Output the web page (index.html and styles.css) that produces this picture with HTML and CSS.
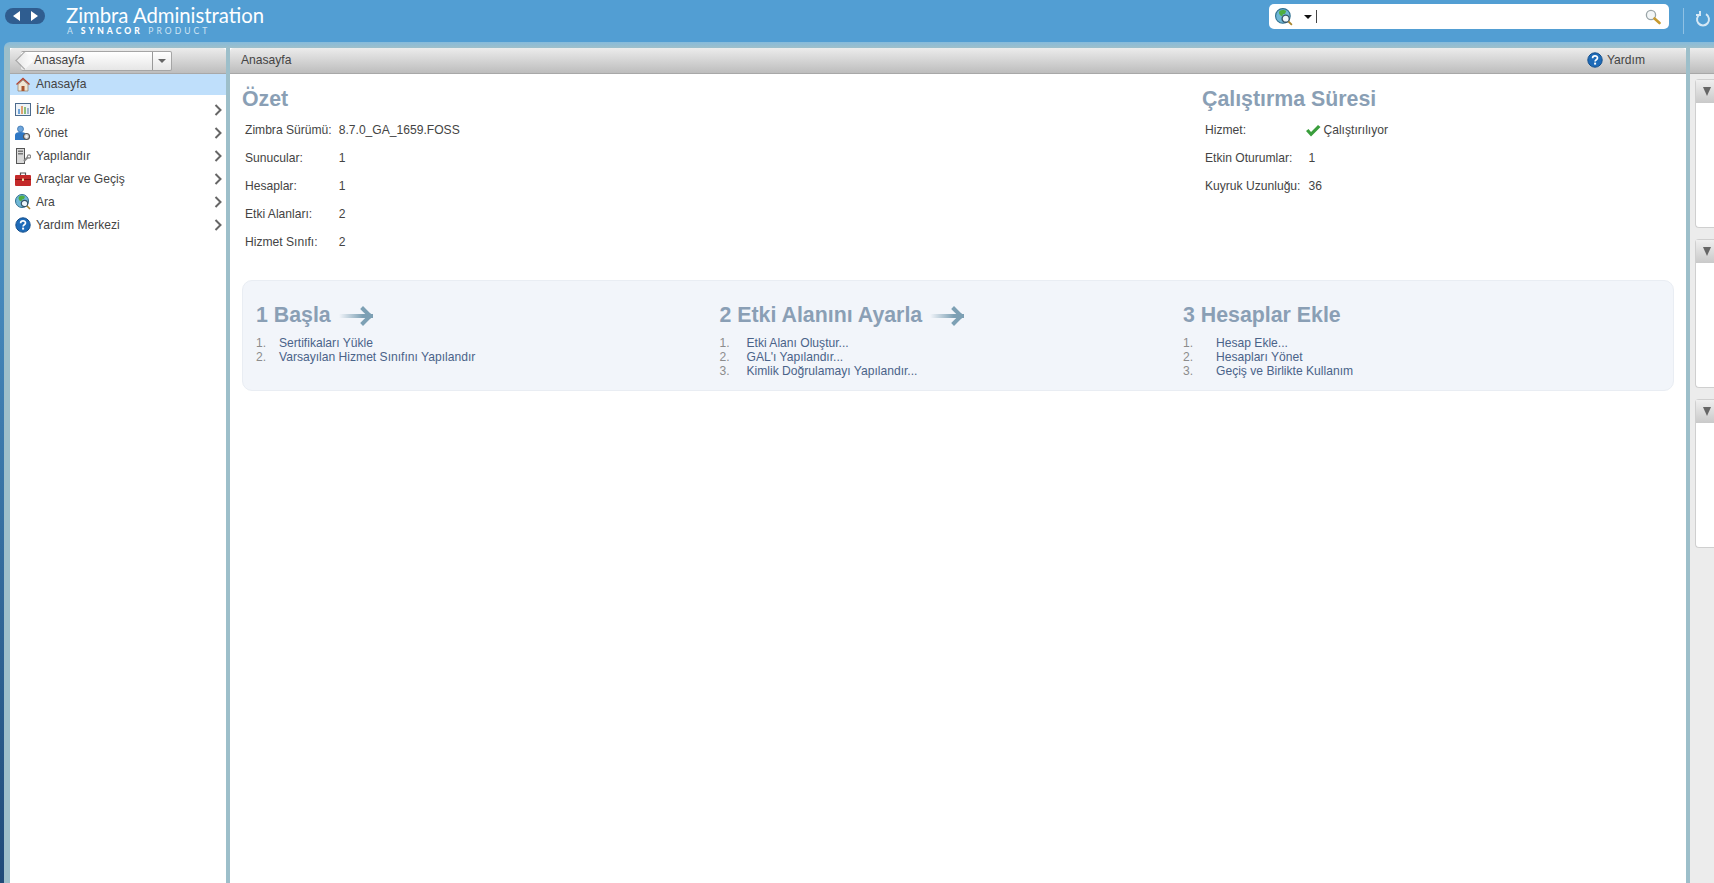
FILE: index.html
```html
<!DOCTYPE html>
<html lang="en">
<head>
    <meta charset="UTF-8">
    <meta name="viewport" content="width=device-width, initial-scale=1.0">
    <title>Zimbra Administration</title>
    <link rel="stylesheet" href="styles.css">
</head>
<body>
    <svg class="icon-defs" width="0" height="0">
        <defs>
            <symbol id="i-globe" viewBox="0 0 16 16">
                <circle cx="7" cy="7" r="6.5" fill="#6fb7d6" stroke="#2f6f8f"/>
                <path d="M4 2.5l3-1 3 1-1 2.5-2 .5-.5 2-2-1-1-2z" fill="#4fae3f"/>
                <circle cx="9.5" cy="9.5" r="3.2" fill="#eef6fa" stroke="#35566a" stroke-width="1.2"/>
                <path d="M12 12l3 3" stroke="#a8842c" stroke-width="1.6"/>
            </symbol>
            <symbol id="i-help" viewBox="0 0 16 16">
                <circle cx="8" cy="8" r="7.2" fill="#1e6bb8" stroke="#154f8c"/>
                <path d="M5.6 6.2c0-3 4.9-3 4.9-.2 0 1.8-2.4 1.8-2.4 3.6" fill="none" stroke="#fff" stroke-width="1.7"/>
                <rect x="7.1" y="10.6" width="2" height="2" fill="#fff"/>
            </symbol>
        </defs>
    </svg>

    <header class="topbar">
        <div class="history-btns">
            <svg width="10" height="12" viewBox="0 0 10 12"><path d="M8 1v10L1 6z" fill="#fff"/></svg>
            <svg width="10" height="12" viewBox="0 0 10 12"><path d="M2 1v10l7-5z" fill="#fff"/></svg>
        </div>
        <div class="logo">
            <div class="logo-name">Zimbra Administration</div>
            <div class="logo-sub">A <b>SYNACOR</b> PRODUCT</div>
        </div>
        <div class="search">
            <svg class="search-type" width="18" height="18"><use href="#i-globe"/></svg>
            <span class="caret-down"></span>
            <span class="search-cursor"></span>
            <svg class="search-go" width="16" height="16" viewBox="0 0 16 16">
                <circle cx="6" cy="6" r="4.6" fill="#f3f6f7" stroke="#9aa5a8" stroke-width="1.3"/>
                <path d="M9.5 9.5l5 4.5" stroke="#c79a2e" stroke-width="2.6" stroke-linecap="round"/>
            </svg>
        </div>
        <div class="refresh">
            <svg width="16" height="18" viewBox="0 0 16 18"><path d="M5 4.2a6 6 0 1 0 6 0M5 1v4H1" fill="none" stroke="#d5e8f5" stroke-width="2"/></svg>
        </div>
    </header>

    <div class="workspace">
        <aside class="sidebar">
            <div class="panel-head sidebar-head">
                <div class="crumb-btn">
                    <span class="crumb-label">Anasayfa</span>
                    <span class="crumb-menu"><span class="caret-down grey"></span></span>
                </div>
            </div>
            <ul class="nav">
                <li class="nav-item active">
                    <svg width="16" height="16" viewBox="0 0 16 16">
                        <path d="M1 8l7-6.5L15 8l-1 1-6-5.5L2 9z" fill="#b5452f"/>
                        <path d="M3 8.5L8 4l5 4.5V15H3z" fill="#f1e6d3" stroke="#8c7a66" stroke-width=".7"/>
                        <rect x="6.5" y="10" width="3" height="5" fill="#a8552f"/>
                    </svg>
                    <span>Anasayfa</span>
                </li>
                <li class="nav-item">
                    <svg width="16" height="16" viewBox="0 0 16 16">
                        <rect x=".5" y="1.5" width="15" height="12" fill="#eef3f8" stroke="#4c6a8c"/>
                        <rect x="3" y="7" width="2" height="5" fill="#6fa3d8"/>
                        <rect x="6" y="4" width="2" height="8" fill="#e0a070"/>
                        <rect x="9" y="5" width="2" height="7" fill="#8cbf7a"/>
                        <rect x="12" y="6" width="2" height="6" fill="#9fb4cc"/>
                    </svg>
                    <span>İzle</span>
                    <svg class="chev" width="8" height="12" viewBox="0 0 8 12"><path d="M1.5 1l5 5-5 5" fill="none" stroke="#666" stroke-width="2"/></svg>
                </li>
                <li class="nav-item">
                    <svg width="16" height="16" viewBox="0 0 16 16">
                        <circle cx="5.5" cy="4" r="3" fill="#6ea6dc" stroke="#2f6aa8" stroke-width=".7"/>
                        <path d="M0 15V10c0-2 2-3 5.5-3S11 8 11 10v5z" fill="#2f78c4"/>
                        <circle cx="11.5" cy="11.5" r="3" fill="#d8d8d8" stroke="#555" stroke-width="1.2"/>
                        <circle cx="11.5" cy="11.5" r="1" fill="#fff"/>
                    </svg>
                    <span>Yönet</span>
                    <svg class="chev" width="8" height="12" viewBox="0 0 8 12"><path d="M1.5 1l5 5-5 5" fill="none" stroke="#666" stroke-width="2"/></svg>
                </li>
                <li class="nav-item">
                    <svg width="16" height="16" viewBox="0 0 16 16">
                        <rect x="1.5" y=".5" width="8" height="15" fill="#d9d9d9" stroke="#555"/>
                        <rect x="3" y="2.5" width="5" height="1.5" fill="#777"/>
                        <rect x="3" y="5" width="5" height="1.5" fill="#777"/>
                        <path d="M9 13l4-4" stroke="#888" stroke-width="2.2"/>
                        <circle cx="14" cy="8.5" r="1.6" fill="none" stroke="#888" stroke-width="1.2"/>
                    </svg>
                    <span>Yapılandır</span>
                    <svg class="chev" width="8" height="12" viewBox="0 0 8 12"><path d="M1.5 1l5 5-5 5" fill="none" stroke="#666" stroke-width="2"/></svg>
                </li>
                <li class="nav-item">
                    <svg width="16" height="16" viewBox="0 0 16 16">
                        <path d="M5.5 4V2h5v2" fill="none" stroke="#555" stroke-width="1.2"/>
                        <rect y="4" width="16" height="11" rx="1" fill="#c42a2a"/>
                        <rect y="8" width="16" height="1" fill="#7e1414"/>
                        <rect x="7" y="7.5" width="2" height="2.5" fill="#f2d9a0"/>
                    </svg>
                    <span>Araçlar ve Geçiş</span>
                    <svg class="chev" width="8" height="12" viewBox="0 0 8 12"><path d="M1.5 1l5 5-5 5" fill="none" stroke="#666" stroke-width="2"/></svg>
                </li>
                <li class="nav-item">
                    <svg width="16" height="16"><use href="#i-globe"/></svg>
                    <span>Ara</span>
                    <svg class="chev" width="8" height="12" viewBox="0 0 8 12"><path d="M1.5 1l5 5-5 5" fill="none" stroke="#666" stroke-width="2"/></svg>
                </li>
                <li class="nav-item">
                    <svg width="16" height="16"><use href="#i-help"/></svg>
                    <span>Yardım Merkezi</span>
                    <svg class="chev" width="8" height="12" viewBox="0 0 8 12"><path d="M1.5 1l5 5-5 5" fill="none" stroke="#666" stroke-width="2"/></svg>
                </li>
            </ul>
        </aside>

        <main class="content">
            <div class="panel-head content-head">
                <span>Anasayfa</span>
                <span class="help-link">
                    <svg width="16" height="16"><use href="#i-help"/></svg>
                    Yardım
                </span>
            </div>
            <div class="content-body">
                <div class="summary">
                    <section class="summary-left">
                        <h2>Özet</h2>
                        <table class="info">
                            <tr><td>Zimbra Sürümü:</td><td>8.7.0_GA_1659.FOSS</td></tr>
                            <tr><td>Sunucular:</td><td>1</td></tr>
                            <tr><td>Hesaplar:</td><td>1</td></tr>
                            <tr><td>Etki Alanları:</td><td>2</td></tr>
                            <tr><td>Hizmet Sınıfı:</td><td>2</td></tr>
                        </table>
                    </section>
                    <section class="summary-right">
                        <h2>Çalıştırma Süresi</h2>
                        <table class="info">
                            <tr>
                                <td>Hizmet:</td>
                                <td>
                                    <span class="status">
                                        <svg width="16" height="13" viewBox="0 0 16 13"><path d="M1 7l2.5-2 2.5 3L13 1l2.5 2L6 12.5z" fill="#3a9e3c"/></svg>
                                        Çalıştırılıyor
                                    </span>
                                </td>
                            </tr>
                            <tr><td>Etkin Oturumlar:</td><td>1</td></tr>
                            <tr><td>Kuyruk Uzunluğu:</td><td>36</td></tr>
                        </table>
                    </section>
                </div>

                <div class="steps">
                    <section class="step">
                        <h3>1 Başla <span class="arrow"></span></h3>
                        <ol class="step-list step-list-a">
                            <li>Sertifikaları Yükle</li>
                            <li>Varsayılan Hizmet Sınıfını Yapılandır</li>
                        </ol>
                    </section>
                    <section class="step">
                        <h3>2 Etki Alanını Ayarla <span class="arrow"></span></h3>
                        <ol class="step-list step-list-b">
                            <li>Etki Alanı Oluştur...</li>
                            <li>GAL'ı Yapılandır...</li>
                            <li>Kimlik Doğrulamayı Yapılandır...</li>
                        </ol>
                    </section>
                    <section class="step">
                        <h3>3 Hesaplar Ekle</h3>
                        <ol class="step-list step-list-c">
                            <li>Hesap Ekle...</li>
                            <li>Hesapları Yönet</li>
                            <li>Geçiş ve Birlikte Kullanım</li>
                        </ol>
                    </section>
                </div>
            </div>
        </main>

        <aside class="side-right">
            <div class="panel-head"></div>
            <div class="gadgets">
                <div class="gadget"><div class="gadget-head"><span class="tri"></span></div></div>
                <div class="gadget"><div class="gadget-head"><span class="tri"></span></div></div>
                <div class="gadget"><div class="gadget-head"><span class="tri"></span></div></div>
            </div>
        </aside>
    </div>
</body>
</html>
```

FILE: styles.css
```css
:root {
    --top-blue: #529ed3;
    --gutter: #9dbfca;
    --text-color: #444;
    --heading: #8a9fb5;
    --link: #4a6389;
}

html, body {
    height: 100%;
}

body {
    margin: 0;
    display: flex;
    flex-direction: column;
    overflow: hidden;
    font-family: "Liberation Sans", Arial, sans-serif;
    font-size: 12.1px;
    color: var(--text-color);
    background: linear-gradient(var(--top-blue) 10%, #1f4a78);
}

.icon-defs {
    position: absolute;
}

.topbar {
    height: 42px;
    flex: none;
    display: flex;
    align-items: flex-start;
    background-color: var(--top-blue);
}

.history-btns {
    width: 40px;
    height: 16px;
    margin: 8px 0 0 5px;
    display: flex;
    align-items: center;
    justify-content: space-around;
    padding: 0 3px;
    box-sizing: border-box;
    border-radius: 8px;
    background-color: #2f5d90;
}

.logo {
    margin: 5px 0 0 21px;
    color: #fff;
}

.logo-name {
    font-family: Lato, sans-serif;
    font-weight: 400;
    font-size: 20.3px;
    line-height: 21px;
}

.logo-sub {
    font-family: Lato, sans-serif;
    font-size: 8.5px;
    line-height: 10px;
    letter-spacing: 3.1px;
    margin-left: 1px;
    color: #cfe4f3;
}

.logo-sub b {
    color: #fff;
    font-weight: 900;
}

.search {
    width: 400px;
    height: 25px;
    margin: 4px 0 0 auto;
    display: flex;
    align-items: center;
    padding: 0 8px 0 6px;
    box-sizing: border-box;
    border-radius: 5px;
    background-color: #fff;
}

.caret-down {
    display: inline-block;
    border-top: 4px solid #111;
    border-left: 4px solid transparent;
    border-right: 4px solid transparent;
}

.caret-down.grey {
    border-top-color: #666;
}

.search .caret-down {
    margin-left: 11px;
}

.search-cursor {
    width: 1px;
    height: 13px;
    margin-left: 4px;
    background-color: #444;
}

.search-go {
    margin-left: auto;
}

.refresh {
    width: 31px;
    height: 26px;
    margin: 8px 0 0 14px;
    padding: 2px 0 0 11px;
    box-sizing: border-box;
    border-left: 1px solid #8fc1e4;
}

.workspace {
    flex: 1;
    display: flex;
    gap: 4px;
    min-height: 0;
    margin-left: 4px;
    padding: 6px 0 0 6px;
    border-radius: 6px 0 0 0;
    background: linear-gradient(#86bbdb, var(--gutter) 6px);
}

.panel-head {
    height: 26px;
    flex: none;
    box-sizing: border-box;
    border-radius: 4px 4px 0 0;
    border-bottom: 1px solid #a8a8a8;
    background: linear-gradient(#ececec, #bdbdbd);
}

.sidebar {
    width: 216px;
    flex: none;
    display: flex;
    flex-direction: column;
    background-color: #fff;
}

.sidebar-head {
    padding: 3px 0 0 11px;
}

.crumb-btn {
    position: relative;
    width: 151px;
    height: 20px;
    display: flex;
    box-sizing: border-box;
    border: 1px solid #a5a5a5;
    border-left: none;
    border-radius: 2px;
    background: linear-gradient(#fff, #e6e6e6);
}

/* back-arrow tip on the left of the button */
.crumb-btn::before {
    content: "";
    position: absolute;
    left: -3px;
    top: 2px;
    width: 13px;
    height: 13px;
    box-sizing: border-box;
    border-left: 1px solid #a5a5a5;
    border-bottom: 1px solid #a5a5a5;
    background: linear-gradient(45deg, #e8e8e8, #fff);
    transform: rotate(45deg);
}

.crumb-label {
    position: relative;
    flex: 1;
    padding-left: 13px;
    line-height: 16px;
}

.crumb-menu {
    width: 18px;
    display: flex;
    align-items: center;
    justify-content: center;
    border-left: 1px solid #999;
}

.nav {
    list-style: none;
    margin: 0;
    padding: 0;
}

.nav-item {
    height: 23px;
    display: flex;
    align-items: center;
    gap: 5px;
    padding: 0 4px 0 5px;
}

.nav-item.active {
    height: 19px;
    padding-bottom: 2px;
    margin-bottom: 3px;
    background-color: #bfdffb;
}

.chev {
    margin-left: auto;
}

.content {
    width: 1456px;
    flex: none;
    display: flex;
    flex-direction: column;
    background-color: #fff;
}

.content-head {
    display: flex;
    align-items: center;
    justify-content: space-between;
    padding: 0 41px 2px 11px;
}

.help-link {
    display: flex;
    align-items: center;
    gap: 4px;
}

.content-body {
    padding: 14px 12px 0 12px;
}

h2, h3 {
    margin: 0;
    font-weight: bold;
    color: var(--heading);
    font-size: 21.33px;
    line-height: 23px;
}

.summary {
    display: flex;
    height: 192px;
}

.summary-left {
    width: 960px;
}

.info {
    border-collapse: collapse;
    margin-top: 5px;
}

.info td {
    height: 28px;
    padding: 0 4px 0 3px;
}

.summary-right .info td {
    padding-right: 5px;
}

.status {
    display: flex;
    align-items: center;
    gap: 2px;
    margin-left: -3px;
}

.steps {
    display: flex;
    height: 111px;
    padding: 23px 13px 0;
    box-sizing: border-box;
    border: 1px solid #e9edf3;
    border-radius: 10px;
    background-color: #f2f5fa;
}

.step {
    width: 463.5px;
    flex: none;
}

.step h3 {
    display: flex;
    align-items: center;
    gap: 8px;
}

.arrow {
    position: relative;
    width: 34px;
    height: 4px;
    background: linear-gradient(90deg, #f2f5fa, #7da0b4 70%);
}

.arrow::after {
    content: "";
    position: absolute;
    right: 3px;
    top: -5px;
    width: 14px;
    height: 14px;
    border-top: 4px solid #7da0b4;
    border-right: 4px solid #7da0b4;
    box-sizing: border-box;
    transform: rotate(45deg);
}

.step-list {
    list-style: none;
    margin: 9px 0 0;
    padding: 0;
    counter-reset: step;
    color: var(--link);
    line-height: 14px;
}

.step-list li {
    counter-increment: step;
    display: flex;
}

.step-list li::before {
    content: counter(step) ".";
    color: #8c8c8c;
}

.step-list-a li::before {
    width: 23px;
}

.step-list-b li::before {
    width: 27px;
}

.step-list-c li::before {
    width: 33px;
}

.side-right {
    flex: 1;
    min-width: 0;
    display: flex;
    flex-direction: column;
    background-color: #ececec;
}

.gadgets {
    display: flex;
    flex-direction: column;
    gap: 11px;
    padding: 5px 0 0 5px;
}

.gadget {
    height: 149px;
    box-sizing: border-box;
    border: 1px solid #cfcfcf;
    border-right: none;
    border-radius: 4px 0 0 4px;
    background-color: #fff;
}

.gadget-head {
    height: 23px;
    display: flex;
    align-items: center;
    padding-left: 7px;
    background: linear-gradient(#efefef, #c9c9c9);
}

.tri {
    border-top: 9px solid #666;
    border-left: 4.5px solid transparent;
    border-right: 4.5px solid transparent;
}
```
